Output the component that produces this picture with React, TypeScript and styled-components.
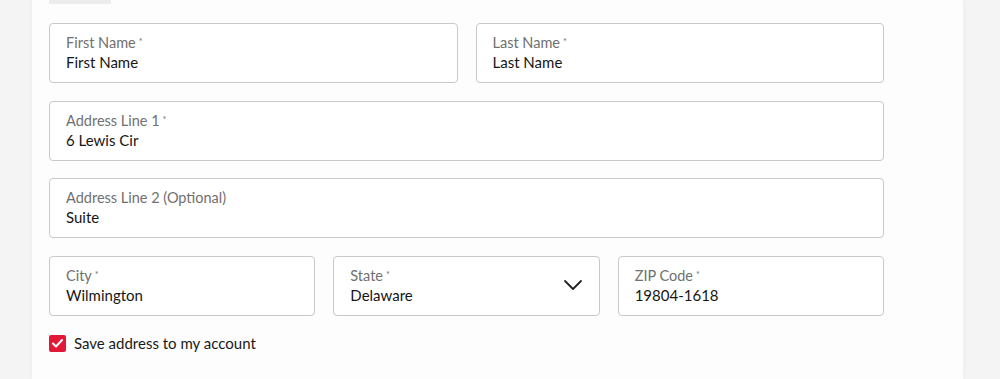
import styled, { createGlobalStyle } from 'styled-components';

const GlobalStyle = createGlobalStyle`
  body {
    margin: 0;
    background: #f4f4f4;
    font-family: Lato, "Liberation Sans", sans-serif;
  }
`;

const Page = styled.div`
  height: 379px;
  overflow: hidden;
  padding-left: 32px;
`;

const Card = styled.div`
  width: 931px;
  height: 100%;
  background: #fdfdfd;
  box-shadow: 0 0 6px rgba(0, 0, 0, 0.04);
  padding: 0 17px;
  box-sizing: border-box;
`;

const TabStub = styled.div`
  width: 62px;
  height: 4px;
  background: #ececec;
  margin-bottom: 19px;
`;

const Form = styled.div`
  width: 835px;
  display: flex;
  flex-direction: column;
  gap: 17.6px;
`;

const Row = styled.div<{ $cols: number }>`
  display: grid;
  grid-template-columns: repeat(${({ $cols }) => $cols}, 1fr);
  gap: 18px;
`;

const Field = styled.div`
  position: relative;
  height: 60px;
  border: 1px solid #c9c9c9;
  border-radius: 4px;
  background: #fff;
  box-sizing: border-box;
  padding: 10px 16px 0;
  display: flex;
  flex-direction: column;
`;

const Label = styled.span`
  font-size: 14.5px;
  line-height: 18px;
  color: #707070;
`;

const Star = styled.span`
  font-size: 9px;
  vertical-align: top;
  margin-left: 3px;
  position: relative;
  top: -1px;
`;

const Value = styled.span`
  font-size: 15px;
  line-height: 20px;
  color: #161616;
`;

const Chevron = styled.svg`
  position: absolute;
  right: 16px;
  top: 18px;
`;

const CheckRow = styled.label`
  display: flex;
  align-items: center;
  gap: 8px;
  margin-top: 1px;
  font-size: 15px;
  color: #1a1a1a;
`;

const CheckBox = styled.span`
  width: 17px;
  height: 17px;
  background: #e31837;
  border-radius: 2px;
  display: flex;
  align-items: center;
  justify-content: center;
`;

interface InputProps {
  label: string;
  value: string;
  required?: boolean;
  select?: boolean;
}

function Input({ label, value, required = true, select }: InputProps) {
  return (
    <Field>
      <Label>
        {label}
        {required && <Star>*</Star>}
      </Label>
      <Value>{value}</Value>
      {select && (
        <Chevron width="20" height="20" viewBox="0 0 20 20" fill="none">
          <path d="M2 6l8 8 8-8" stroke="#222" strokeWidth="1.8" strokeLinecap="round" strokeLinejoin="round" />
        </Chevron>
      )}
    </Field>
  );
}

export default function App() {
  return (
    <>
      <GlobalStyle />
      <Page>
        <Card>
          <TabStub />
          <Form>
            <Row $cols={2}>
              <Input label="First Name" value="First Name" />
              <Input label="Last Name" value="Last Name" />
            </Row>
            <Input label="Address Line 1" value="6 Lewis Cir" />
            <Input label="Address Line 2 (Optional)" value="Suite" required={false} />
            <Row $cols={3}>
              <Input label="City" value="Wilmington" />
              <Input label="State" value="Delaware" select />
              <Input label="ZIP Code" value="19804-1618" />
            </Row>
            <CheckRow>
              <CheckBox>
                <svg width="13" height="13" viewBox="0 0 13 13" fill="none">
                  <path d="M2 6.5l3 3 6-6.5" stroke="#fff" strokeWidth="2" strokeLinecap="round" strokeLinejoin="round" />
                </svg>
              </CheckBox>
              Save address to my account
            </CheckRow>
          </Form>
        </Card>
      </Page>
    </>
  );
}
